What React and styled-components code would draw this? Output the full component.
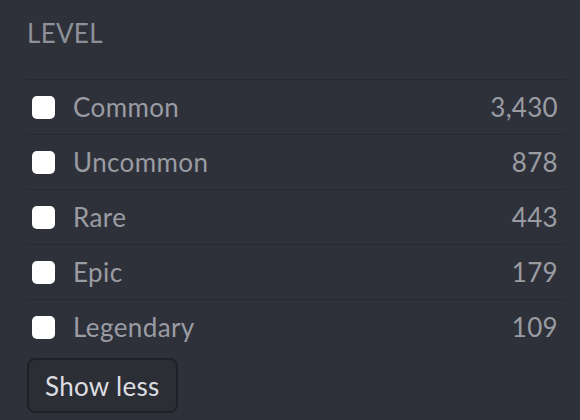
import React, { useState } from 'react'
import styled, { createGlobalStyle } from 'styled-components'

const GlobalStyle = createGlobalStyle`
  html, body {
    margin: 0;
    padding: 0;
    background: #2f313a;
  }
  body {
    font-family: Lato, 'Open Sans', sans-serif;
  }
`

const levels = [
  { name: 'Common', count: '3,430' },
  { name: 'Uncommon', count: '878' },
  { name: 'Rare', count: '443' },
  { name: 'Epic', count: '179' },
  { name: 'Legendary', count: '109' },
]

const App = () => {
  const [checked, setChecked] = useState({})

  return (
    <>
      <GlobalStyle />
      <Wrapper>
        <Title>LEVEL</Title>
        <List>
          {levels.map((l) => (
            <Row key={l.name}>
              <Label>
                <Box
                  type='checkbox'
                  checked={!!checked[l.name]}
                  onChange={() => setChecked({ ...checked, [l.name]: !checked[l.name] })}
                />
                {l.name}
              </Label>
              <Count>{l.count}</Count>
            </Row>
          ))}
        </List>
        <ShowLess>Show less</ShowLess>
      </Wrapper>
    </>
  )
}

const Wrapper = styled.section`
  width: 538px;
  height: 420px;
  padding: 0 15px 0 27px;
  box-sizing: content-box;
  overflow: hidden;
`

const Title = styled.h3`
  margin: 0;
  padding-top: 17px;
  height: 80px;
  box-sizing: border-box;
  font-size: 26px;
  font-weight: 400;
  color: #8d9098;
  letter-spacing: 0.3px;
  border-bottom: 1px solid #272930;
`

const List = styled.ul`
  list-style: none;
  margin: 0;
  padding: 0;
`

const Row = styled.li`
  display: flex;
  align-items: center;
  justify-content: space-between;
  height: 55px;
  box-sizing: border-box;
  padding: 0 7px 0 5px;
  border-bottom: 1px solid #272930;

  &:last-child {
    border-bottom: none;
    height: 54px;
  }
`

const Label = styled.label`
  display: flex;
  align-items: center;
  gap: 18px;
  font-size: 26px;
  color: #9a9ca3;
  letter-spacing: 0.4px;
  cursor: pointer;
`

const Box = styled.input`
  appearance: none;
  margin: 0;
  width: 23px;
  height: 23px;
  border-radius: 5px;
  background: #ffffff;
  cursor: pointer;

  &:checked {
    background: #6c8cff;
  }
`

const Count = styled.span`
  font-size: 26px;
  color: #9a9ca3;
  letter-spacing: 0.3px;
`

const ShowLess = styled.button`
  margin-top: 4px;
  height: 55px;
  padding: 0 16px;
  border: 2px solid #1f2127;
  border-radius: 8px;
  background: #2c2e36;
  color: #dcdde0;
  font-family: Lato, 'Open Sans', sans-serif;
  font-size: 26px;
  letter-spacing: 0.3px;
  cursor: pointer;
`

export default App
